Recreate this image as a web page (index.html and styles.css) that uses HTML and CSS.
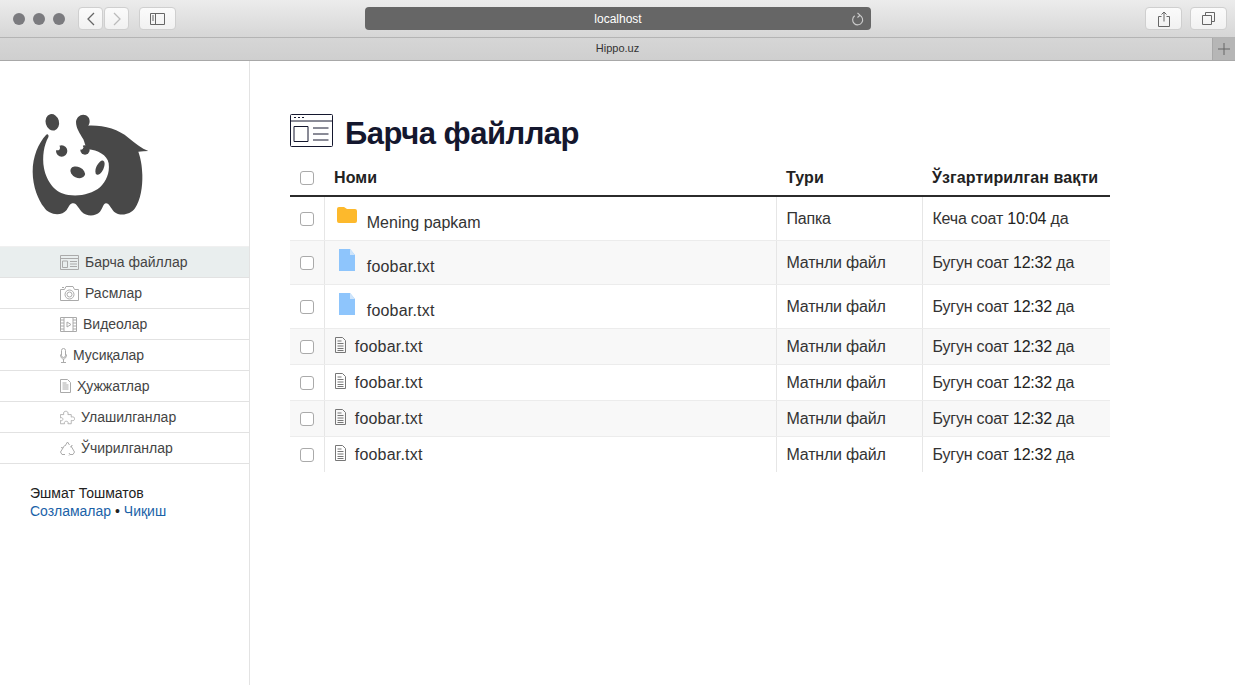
FILE: index.html
```html
<!DOCTYPE html>
<html lang="en">
<head>
    <meta charset="UTF-8">
    <title>Hippo.uz</title>
    <link rel="stylesheet" href="styles.css">
</head>
<body>
    <header class="toolbar">
        <div class="lights"><span></span><span></span><span></span></div>
        <div class="nav-buttons">
            <button class="tool-btn small">
                <svg width="12" height="16" viewBox="0 0 12 16"><path d="M9 2 3 8l6 6" fill="none" stroke="#666" stroke-width="1.3"/></svg>
            </button>
            <button class="tool-btn small">
                <svg width="12" height="16" viewBox="0 0 12 16"><path d="m3 2 6 6-6 6" fill="none" stroke="#bbb" stroke-width="1.3"/></svg>
            </button>
        </div>
        <button class="tool-btn wide">
            <svg width="15" height="12" viewBox="0 0 15 12"><path d="M.5.500h14v11H.5zM5.500.5v11M2 3h2M2 5h2M2 7h2" fill="none" stroke="#666"/></svg>
        </button>
        <div class="address">
            <span>localhost</span>
            <svg class="reload" width="14" height="15" viewBox="0 0 14 15"><path d="M8.500 3.200a5 5 0 1 1-4.800.6M6.500 1l2.500 2.200L6.500 5.500" fill="none" stroke="#ccc" stroke-width="1.100"/></svg>
        </div>
        <button class="tool-btn wide">
            <svg width="12" height="16" viewBox="0 0 12 16"><path d="M3.500 5.500h-3v10h11v-10h-3M6 10.500V1M3.500 3.500 6 1l2.500 2.500" fill="none" stroke="#666"/></svg>
        </button>
        <button class="tool-btn wide last">
            <svg width="13" height="13" viewBox="0 0 13 13"><path d="M.5 3.500h9v9h-9zM3.500 3.500v-3h9v9h-3" fill="none" stroke="#666"/></svg>
        </button>
    </header>
    <div class="tabbar">
        <div class="tab-title">Hippo.uz</div>
        <div class="tab-add">
            <svg width="12" height="12" viewBox="0 0 12 12"><path d="M6 0v12M0 6h12" stroke="#666"/></svg>
        </div>
    </div>

    <div class="page">
        <aside class="sidebar">
            <svg class="logo" width="140" height="125" viewBox="0 0 420 375">
                <ellipse cx="97" cy="67" rx="20" ry="25" transform="rotate(-15 97 67)" fill="#484848"/>
                <path fill="#484848" d="M78 105C55 130 38 170 38 215C38 260 55 300 72 322C85 345 125 350 140 330C148 318 150 310 160 310C170 310 175 325 185 335C200 350 225 350 240 335C250 322 250 310 258 310C268 310 272 325 282 335C300 350 330 345 345 325C362 300 368 260 367 225C366 195 362 175 355 155C365 154 375 154 385 153C365 145 345 130 325 113C295 88 250 75 205 77C212 68 210 52 198 46C184 40 170 50 168 65C168 85 180 100 190 118C195 130 195 140 205 148C232 150 262 165 266 190C270 220 258 245 240 262C215 282 180 290 145 285C105 280 80 245 72 205C66 170 72 135 85 112C88 105 82 100 78 105Z"/>
                <circle cx="125" cy="153" r="17" fill="#484848"/>
                <circle cx="112" cy="143" r="8" fill="#fff"/>
                <circle cx="195" cy="150" r="14" fill="#484848"/>
                <circle cx="183" cy="142" r="7" fill="#fff"/>
                <ellipse cx="173" cy="217" rx="23" ry="16" transform="rotate(25 173 217)" fill="#484848"/>
                <ellipse cx="240" cy="203" rx="11" ry="23" transform="rotate(25 240 203)" fill="#484848"/>
            </svg>
            <nav class="side-nav">
                <a class="side-link active" href="#">
                    <svg width="19" height="15" viewBox="0 0 19 15"><path d="M.5.500h18v14H.5zM.5 3.500h18M2.500 6h5v6.500h-5zM10 6.500h7M10 9h7M10 11.500h7" fill="none" stroke="#aaa"/></svg>
                    Барча файллар
                </a>
                <a class="side-link" href="#">
                    <svg width="19" height="15" viewBox="0 0 19 15"><path d="M.5 3.500h4l1.500-3h7l1.500 3h4v11H.5zM2 1.500h2" fill="none" stroke="#aaa"/><circle cx="9.500" cy="8.500" r="4.500" fill="none" stroke="#aaa"/><circle cx="9.500" cy="8.500" r="2.500" fill="none" stroke="#aaa"/></svg>
                    Расмлар
                </a>
                <a class="side-link" href="#">
                    <svg width="17" height="15" viewBox="0 0 17 15"><path d="M.5.500h16v14H.5zM4 .5v14M13 .5v14M.5 3h3.500M.5 6h3.500M.5 9h3.500M.5 12h3.500M13 3h3.500M13 6h3.500M13 9h3.500M13 12h3.500M7 5l4 2.500L7 10z" fill="none" stroke="#aaa"/></svg>
                    Видеолар
                </a>
                <a class="side-link" href="#">
                    <svg width="7" height="15" viewBox="0 0 7 15"><rect x="1.500" y=".5" width="4" height="9" rx="2" fill="none" stroke="#aaa"/><path d="M.5 6.500c0 6 6 6 6 0M3.500 11v3M1 14.500h5" fill="none" stroke="#aaa"/></svg>
                    Мусиқалар
                </a>
                <a class="side-link" href="#">
                    <svg width="11" height="14" viewBox="0 0 11 14"><path d="M.5.500h7l3 3v10H.5zM2.500 4h4M2.500 6h6M2.500 8h6M2.500 10h6" fill="none" stroke="#aaa"/></svg>
                    Ҳужжатлар
                </a>
                <a class="side-link" href="#">
                    <svg width="15" height="15" viewBox="0 0 18 16"><path d="M.5 4.500h4c-1-3 1-4 2.500-4s3.500 1 2.500 4h4v3c3-1 4 .5 4 2s-1 3-4 2v4h-4c1-2.500-1-3-2-3s-3 .5-2 3H.5v-4c2 1 3-.5 3-1.500S2.500 7.500.5 8.500z" fill="none" stroke="#aaa"/></svg>
                    Улашилганлар
                </a>
                <a class="side-link" href="#">
                    <svg width="15" height="15" viewBox="0 0 15 15"><path d="M5 5 7.500 1l2 3M11 5l3.500 6-1.500 2.500H10M5 13.500H2L.5 11 3 7" fill="none" stroke="#aaa"/><path d="M9 12l1 1.500-1 1M4.500 4.500 3 7l-2-.5M11 6.500 11 5l1.500-.5" fill="none" stroke="#aaa"/></svg>
                    Ўчирилганлар
                </a>
            </nav>
            <div class="user-box">
                <div>Эшмат Тошматов</div>
                <div><a href="#">Созламалар</a> • <a href="#">Чиқиш</a></div>
            </div>
        </aside>

        <main class="content">
            <div class="page-title">
                <svg width="43" height="33" viewBox="0 0 43 33"><path d="M1.500.500h40a1 1 0 0 1 1 1v30a1 1 0 0 1-1 1h-40a1 1 0 0 1-1-1v-30a1 1 0 0 1 1-1zM.5 7h42M4 12.500h14v15H4zM23 14h15.500M23 20h15.500M23 26h15.500" fill="none" stroke="#14172e"/><path d="M4 3.500h2M8 3.500h2M12 3.500h2" stroke="#14172e"/></svg>
                <h1>Барча файллар</h1>
            </div>
            <table class="file-table">
                <thead>
                    <tr>
                        <th class="col-check"><span class="check"></span></th>
                        <th class="col-name">Номи</th>
                        <th class="col-type">Тури</th>
                        <th class="col-date">Ўзгартирилган вақти</th>
                    </tr>
                </thead>
                <tbody>
                    <tr class="big">
                        <td><span class="check"></span></td>
                        <td class="name-cell">
                            <svg class="folder-icon" width="23" height="16" viewBox="0 0 23 16"><path d="M3 2a2 2 0 0 1 2-2h5l3 2h8a2 2 0 0 1 2 2v10a2 2 0 0 1-2 2H5a2 2 0 0 1-2-2z" fill="#fdb92c"/></svg>
                            <span>Mening papkam</span>
                        </td>
                        <td>Папка</td>
                        <td>Кеча соат <b>10:04</b> да</td>
                    </tr>
                    <tr class="big">
                        <td><span class="check"></span></td>
                        <td class="name-cell file-cell">
                            <svg class="blue-icon" width="21" height="22" viewBox="0 0 21 22"><path d="M5 0h11l5 6v16H5z" fill="#8ec5fc"/><path d="M16 0l5 6h-5z" fill="#cfe5fb"/></svg>
                            <span class="file-name">foobar.txt</span>
                        </td>
                        <td>Матнли файл</td>
                        <td>Бугун соат <b>12:32</b> да</td>
                    </tr>
                    <tr class="big">
                        <td><span class="check"></span></td>
                        <td class="name-cell file-cell">
                            <svg class="blue-icon" width="21" height="22" viewBox="0 0 21 22"><path d="M5 0h11l5 6v16H5z" fill="#8ec5fc"/><path d="M16 0l5 6h-5z" fill="#cfe5fb"/></svg>
                            <span class="file-name">foobar.txt</span>
                        </td>
                        <td>Матнли файл</td>
                        <td>Бугун соат <b>12:32</b> да</td>
                    </tr>
                    <tr>
                        <td><span class="check"></span></td>
                        <td class="name-cell file-cell">
                            <svg class="doc-icon" width="13" height="16" viewBox="0 0 13 16"><path d="M1.500.500h7l3 3v12h-10zM3.500 4h4M3.500 6.500h6M3.500 9h6M3.500 11.500h6M3.500 13.500h6" fill="none" stroke="#777"/></svg>
                            <span class="file-name">foobar.txt</span>
                        </td>
                        <td>Матнли файл</td>
                        <td>Бугун соат <b>12:32</b> да</td>
                    </tr>
                    <tr>
                        <td><span class="check"></span></td>
                        <td class="name-cell file-cell">
                            <svg class="doc-icon" width="13" height="16" viewBox="0 0 13 16"><path d="M1.500.500h7l3 3v12h-10zM3.500 4h4M3.500 6.500h6M3.500 9h6M3.500 11.500h6M3.500 13.500h6" fill="none" stroke="#777"/></svg>
                            <span class="file-name">foobar.txt</span>
                        </td>
                        <td>Матнли файл</td>
                        <td>Бугун соат <b>12:32</b> да</td>
                    </tr>
                    <tr>
                        <td><span class="check"></span></td>
                        <td class="name-cell file-cell">
                            <svg class="doc-icon" width="13" height="16" viewBox="0 0 13 16"><path d="M1.500.500h7l3 3v12h-10zM3.500 4h4M3.500 6.500h6M3.500 9h6M3.500 11.500h6M3.500 13.500h6" fill="none" stroke="#777"/></svg>
                            <span class="file-name">foobar.txt</span>
                        </td>
                        <td>Матнли файл</td>
                        <td>Бугун соат <b>12:32</b> да</td>
                    </tr>
                    <tr>
                        <td><span class="check"></span></td>
                        <td class="name-cell file-cell">
                            <svg class="doc-icon" width="13" height="16" viewBox="0 0 13 16"><path d="M1.500.500h7l3 3v12h-10zM3.500 4h4M3.500 6.500h6M3.500 9h6M3.500 11.500h6M3.500 13.500h6" fill="none" stroke="#777"/></svg>
                            <span class="file-name">foobar.txt</span>
                        </td>
                        <td>Матнли файл</td>
                        <td>Бугун соат <b>12:32</b> да</td>
                    </tr>
                </tbody>
            </table>
        </main>
    </div>
</body>
</html>
```

FILE: styles.css
```css
html, body {
    height: 100%;
    margin: 0;
    overflow: hidden;
}
body {
    display: flex;
    flex-direction: column;
    font-family: "Liberation Sans", Arial, sans-serif;
    color: #333;
    background-color: #fff;
}
.toolbar {
    display: flex;
    align-items: center;
    height: 37px;
    padding: 0 8px 0 13px;
    background: linear-gradient(#ececec, #d6d6d6);
    border-bottom: 1px solid #b4b4b4;
}
.lights {
    display: flex;
    gap: 8px;
    margin-right: 13px;
}
.lights span {
    width: 12px;
    height: 12px;
    border-radius: 50%;
    background-color: #7b7b7f;
}
.nav-buttons {
    display: flex;
    gap: 1px;
    margin-right: 10px;
}
.tool-btn {
    display: flex;
    align-items: center;
    justify-content: center;
    flex-shrink: 0;
    height: 23px;
    padding: 0;
    background: linear-gradient(#fbfbfb, #f1f1f1);
    border: 1px solid #cfcfcf;
    border-radius: 4px;
}
.tool-btn.small {
    width: 25px;
}
.tool-btn.wide {
    width: 37px;
}
.tool-btn.last {
    margin-left: 8px;
}
.address {
    position: relative;
    flex-shrink: 0;
    width: 506px;
    height: 23px;
    margin: 0 274px 0 189px;
    line-height: 24px;
    text-align: center;
    font-size: 12px;
    color: #fff;
    background-color: #666;
    border-radius: 4px;
}
.reload {
    position: absolute;
    top: 5px;
    right: 6px;
}
.tabbar {
    position: relative;
    height: 22px;
    line-height: 21px;
    text-align: center;
    font-size: 11px;
    color: #333;
    background: linear-gradient(#d6d6d6, #cfcfcf);
    border-bottom: 1px solid #a8a8a8;
}
.tab-add {
    position: absolute;
    top: 0;
    right: 0;
    display: flex;
    align-items: center;
    justify-content: center;
    width: 23px;
    height: 22px;
    background-color: #b6b6b6;
    border-left: 1px solid #a8a8a8;
    box-sizing: border-box;
}
.page {
    flex: 1;
    display: flex;
}
.sidebar {
    width: 250px;
    flex-shrink: 0;
    box-sizing: border-box;
    border-right: 1px solid #e3e3e3;
    padding-top: 39px;
}
.logo {
    display: block;
    margin-left: 20px;
    margin-bottom: 21px;
}
.side-nav {
    display: flex;
    flex-direction: column;
    border-top: 1px solid #f0f0f0;
}
.side-link {
    display: flex;
    align-items: center;
    gap: 6px;
    height: 30px;
    padding-left: 60px;
    font-size: 14px;
    color: #444;
    text-decoration: none;
    border-bottom: 1px solid #e2e2e2;
}
.side-link.active {
    background-color: #e9eeee;
}
.user-box {
    padding: 20px 30px;
    font-size: 14px;
    line-height: 18px;
    color: #222;
}
.user-box a {
    color: #1a62a8;
    text-decoration: none;
}
.content {
    flex: 1;
    padding: 53px 0 0 40px;
}
.page-title {
    display: flex;
    align-items: center;
    gap: 12px;
    height: 32px;
    margin-bottom: 15px;
}
.page-title h1 {
    margin: 8px 0 0;
    font-size: 31px;
    letter-spacing: -0.5px;
    color: #14172e;
}
.file-table {
    width: 820px;
    table-layout: fixed;
    border-collapse: collapse;
    font-size: 16px;
    letter-spacing: -0.2px;
}
.file-table th, .file-table td {
    box-sizing: border-box;
}
.col-check {
    width: 34px;
}
.col-type {
    width: 146px;
}
.col-date {
    width: 188px;
}
.file-table th {
    height: 35px;
    padding: 0 10px;
    text-align: left;
    font-size: 16px;
    letter-spacing: 0.1px;
    color: #222;
    border-bottom: 2px solid #2b2b2b;
}
.file-table td {
    height: 36px;
    padding: 2px 10px 0;
    border-left: 1px solid #e6e6e6;
    border-bottom: 1px solid #ececec;
}
.file-table td:first-child {
    border-left: none;
}
.file-table td.name-cell {
    padding-left: 9px;
}
.file-table td.file-cell {
    padding-top: 0;
}
.file-table td b {
    font-weight: normal;
    color: #222;
}
.file-table tbody tr:last-child td {
    border-bottom: none;
}
.file-table tbody tr.big td {
    height: 44px;
}
.file-table tbody tr:nth-child(even) {
    background-color: #f8f8f8;
}
.check {
    display: block;
    width: 12px;
    height: 12px;
    background-color: #fff;
    border: 1px solid #aaa;
    border-radius: 3px;
}
.name-cell {
    white-space: nowrap;
}
.name-cell span {
    letter-spacing: 0;
}
.name-cell .file-name {
    letter-spacing: 0.2px;
}
.folder-icon {
    margin-right: 6px;
    vertical-align: 5px;
}
.blue-icon {
    margin-right: 8px;
    vertical-align: 1px;
}
.doc-icon {
    margin-right: 4px;
    vertical-align: -1px;
}
```
